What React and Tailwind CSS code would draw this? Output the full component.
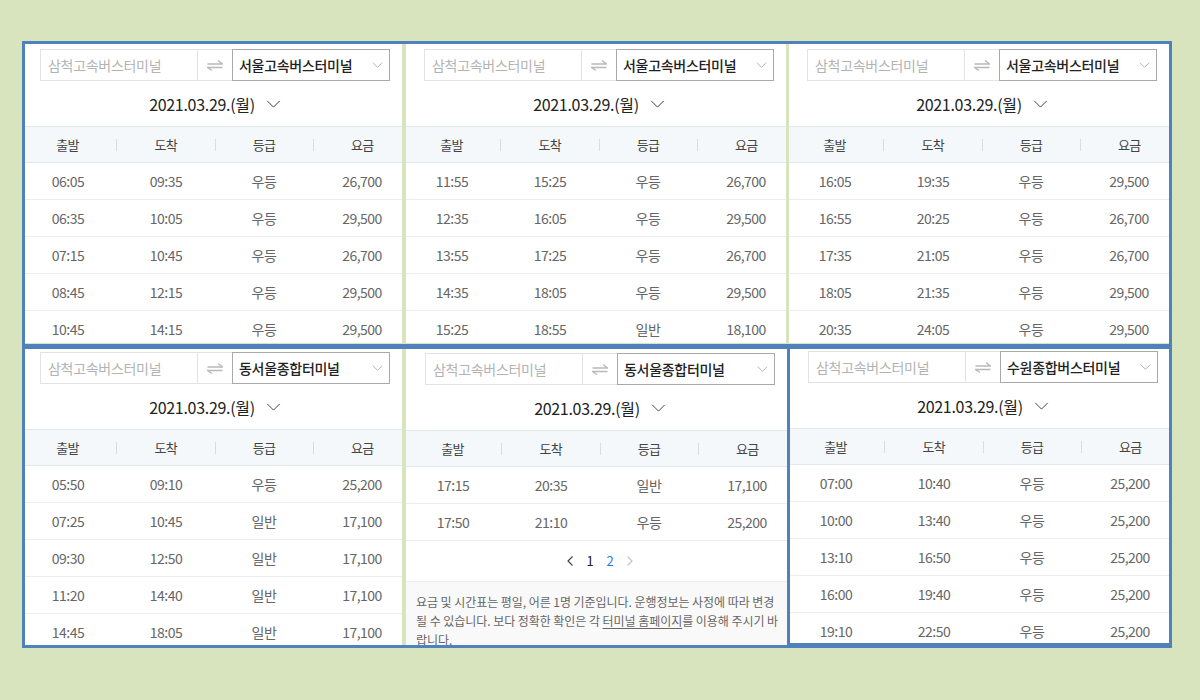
import React from "react";

const panels = [
  {
    to: "서울고속버스터미널",
    shift: "-ml-[6px]",
    pt: "pt-[5px]",
    rows: [
      ["06:05", "09:35", "우등", "26,700"],
      ["06:35", "10:05", "우등", "29,500"],
      ["07:15", "10:45", "우등", "26,700"],
      ["08:45", "12:15", "우등", "29,500"],
      ["10:45", "14:15", "우등", "29,500"],
    ],
  },
  {
    to: "서울고속버스터미널",
    shift: "-ml-[3px]",
    pt: "pt-[5px]",
    rows: [
      ["11:55", "15:25", "우등", "26,700"],
      ["12:35", "16:05", "우등", "29,500"],
      ["13:55", "17:25", "우등", "26,700"],
      ["14:35", "18:05", "우등", "29,500"],
      ["15:25", "18:55", "일반", "18,100"],
    ],
  },
  {
    to: "서울고속버스터미널",
    shift: "-ml-[3px]",
    pt: "pt-[5px]",
    rows: [
      ["16:05", "19:35", "우등", "29,500"],
      ["16:55", "20:25", "우등", "26,700"],
      ["17:35", "21:05", "우등", "26,700"],
      ["18:05", "21:35", "우등", "29,500"],
      ["20:35", "24:05", "우등", "29,500"],
    ],
  },
  {
    to: "동서울종합터미널",
    shift: "-ml-[6px]",
    pt: "pt-[3px]",
    rows: [
      ["05:50", "09:10", "우등", "25,200"],
      ["07:25", "10:45", "일반", "17,100"],
      ["09:30", "12:50", "일반", "17,100"],
      ["11:20", "14:40", "일반", "17,100"],
      ["14:45", "18:05", "일반", "17,100"],
    ],
  },
  {
    to: "동서울종합터미널",
    shift: "-ml-[2px]",
    pt: "pt-[4px]",
    pager: true,
    rows: [
      ["17:15", "20:35", "일반", "17,100"],
      ["17:50", "21:10", "우등", "25,200"],
    ],
  },
  {
    to: "수원종합버스터미널",
    shift: "-ml-[3px]",
    pt: "pt-[2px]",
    rows: [
      ["07:00", "10:40", "우등", "25,200"],
      ["10:00", "13:40", "우등", "25,200"],
      ["13:10", "16:50", "우등", "25,200"],
      ["16:00", "19:40", "우등", "25,200"],
      ["19:10", "22:50", "우등", "25,200"],
    ],
  },
];

const Chevron = ({ className }) => (
  <svg viewBox="0 0 16 9" className={className} fill="none" stroke="currentColor" strokeWidth="1.1">
    <path d="M1 1l7 7 7-7" />
  </svg>
);

// small < and > for the pager
const PageArrow = ({ dir, className }) => (
  <svg width="6" height="10" viewBox="0 0 6 10" className={className} fill="none" stroke="currentColor" strokeWidth="1.2">
    <path d={dir === "left" ? "M5.5 0.5L1 5l4.5 4.5" : "M0.5 0.5L5 5 0.5 9.5"} />
  </svg>
);

const SwapIcon = () => (
  <svg width="16" height="11" viewBox="0 0 16 11" fill="none" stroke="#b9b9b9" strokeWidth="1.3">
    <path d="M0.5 4h15L11 0.5" />
    <path d="M15.5 7.5H0.5L5 10.5" />
  </svg>
);

const Panel = ({ to, rows, shift, pt, pager }) => {
  return (
    <div className="h-full overflow-hidden bg-white">
      <div className={`w-[392px] ${shift} ${pt}`}>
        <div className="mx-[21px] flex h-[32px] text-[14px] tracking-[-0.3px]">
          <div className="flex w-[158px] items-center border border-[#e3e3e3] pl-[7px] text-[#b3b3b3]">
            삼척고속버스터미널
          </div>
          <div className="flex w-[34px] items-center justify-center border-y border-[#e3e3e3]">
            <SwapIcon />
          </div>
          <div className="flex flex-1 items-center justify-between border border-[#a9a9a9] pl-[6px] pr-[6px] font-medium text-[#222]">
            {to}
            <Chevron className="h-[6px] w-[11px] text-[#999]" />
          </div>
        </div>

        <div className="flex h-[45px] items-center justify-center gap-[11px] text-[16px] tracking-[-0.3px] text-[#222]">
          <span>2021.03.29.(월)</span>
          <Chevron className="h-[8px] w-[15px] text-[#444]" />
        </div>

        <div className="flex h-[37px] items-center border-y border-[#e3e8ee] bg-[#f5f8fb] text-[13px] tracking-[-0.5px] text-[#444]">
          <div className="flex-1 text-center">출발</div>
          <div className="h-3 w-px bg-[#dadde0]" />
          <div className="flex-1 text-center">도착</div>
          <div className="h-3 w-px bg-[#dadde0]" />
          <div className="flex-1 text-center">등급</div>
          <div className="h-3 w-px bg-[#dadde0]" />
          <div className="flex-1 text-center">요금</div>
        </div>

        {rows.map((r, i) => (
          <div
            key={i}
            className="grid h-[37px] grid-cols-4 items-center border-b border-[#ededed] text-center text-[14px] tracking-[-0.5px] text-[#666]"
          >
            {r.map((c, j) => (
              <div key={j}>{c}</div>
            ))}
          </div>
        ))}

        {pager && (
          <>
            <div className="flex h-[41px] items-center justify-center border-b border-[#ececec] text-[13px]">
              <div className="flex w-5 justify-center text-[#444]">
                <PageArrow dir="left" />
              </div>
              <div className="w-5 text-center text-[#222]">1</div>
              <div className="w-5 text-center text-[#2a7be4]">2</div>
              <div className="flex w-5 justify-center text-[#c4c4c4]">
                <PageArrow dir="right" />
              </div>
            </div>
            <div className="h-[80px] bg-[#f9f9f9] px-3 pt-[10px] text-[12px] leading-[19px] tracking-[-0.05px] text-[#666]">
              <p>요금 및 시간표는 평일, 어른 1명 기준입니다. 운행정보는 사정에 따라 변경</p>
              <p>
                될 수 있습니다. 보다 정확한 확인은 각{" "}
                <span className="underline underline-offset-2">터미널 홈페이지</span>를 이용해 주시기 바
              </p>
              <p>랍니다.</p>
            </div>
          </>
        )}
      </div>
    </div>
  );
};

export default function App() {
  return (
    <div className="min-h-[700px] w-full bg-[#d7e4bd] pl-[22px] pt-[41px] font-['Noto_Sans_CJK_KR','Noto_Sans',sans-serif] leading-normal">
      <div className="flex h-[306px] w-[1150px] border-[3px] border-[#4f81bd]">
        <div className="h-[299px] w-[377px]">
          <Panel {...panels[0]} />
        </div>
        <div className="ml-[4px] h-[299px] w-[380px]">
          <Panel {...panels[1]} />
        </div>
        <div className="ml-[3px] h-[299px] w-[380px]">
          <Panel {...panels[2]} />
        </div>
      </div>
      <div className="flex h-[301px] w-[1150px] border-[3px] border-t-2 border-[#4f81bd]">
        <div className="h-full w-[377px]">
          <Panel {...panels[3]} />
        </div>
        <div className="ml-[4px] h-full w-[381px]">
          <Panel {...panels[4]} />
        </div>
        <div className="h-full w-[3px] bg-[#4f81bd]" />
        <div className="h-full w-[379px] border-b-2 border-[#4f81bd]">
          <Panel {...panels[5]} />
        </div>
      </div>
    </div>
  );
}
